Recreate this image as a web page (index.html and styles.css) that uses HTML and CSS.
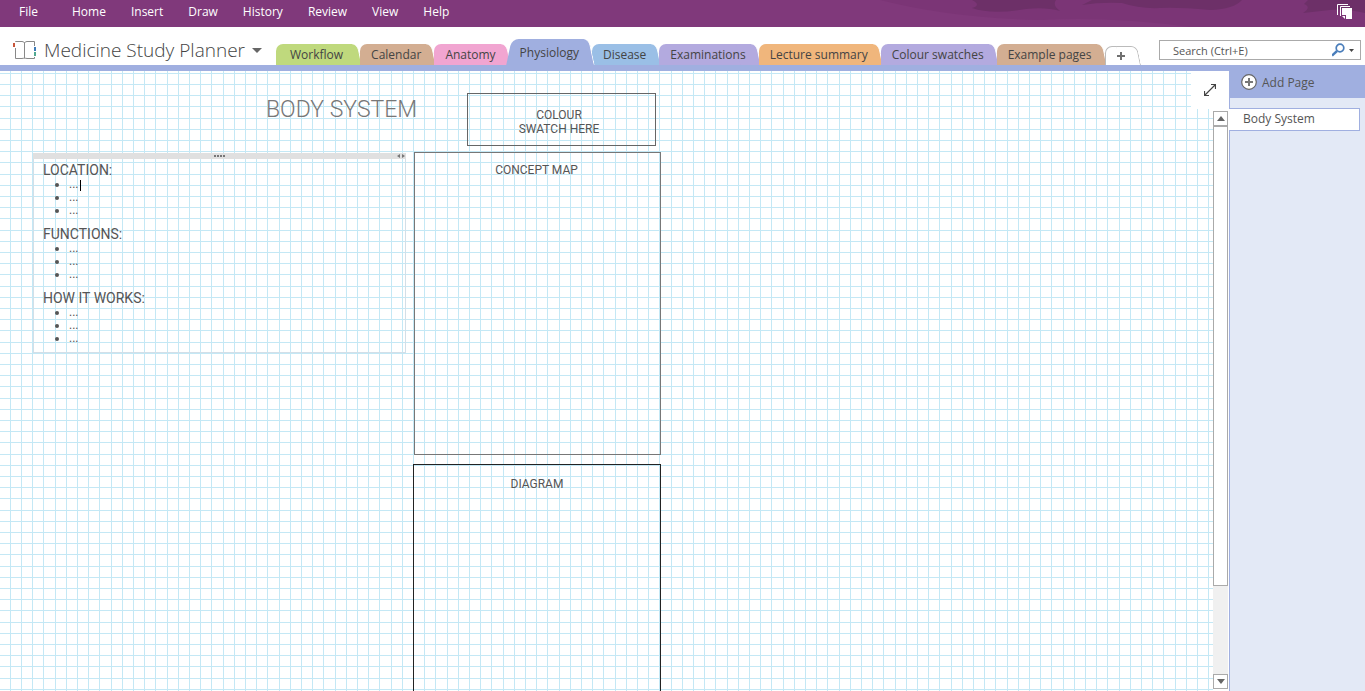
FILE: index.html
```html
<!DOCTYPE html>
<html lang="en">
<head>
  <meta charset="UTF-8">
  <title>Medicine Study Planner</title>
  <link rel="stylesheet" href="styles.css">
</head>
<body>

  <header class="menubar">
    <svg class="brush" width="505" height="27" viewBox="0 0 505 27" aria-hidden="true">
      <path fill="#7b3576" d="M20 0H505V27H330Q250 16 180 20Q90 18 20 0z"/>
      <path fill="#6d3068" d="M112 0H196Q192 5 200 11Q186 7 166 9Q132 15 112 8Q122 5 112 0z"/>
      <path fill="#6d3068" d="M232 0H382Q374 9 350 10Q318 7 300 8Q280 9 262 3Q240 2 222 5z"/>
      <path fill="#6d3068" d="M448 0H505V13Q484 8 470 10L443 13Q452 7 444 4z"/>
    </svg>
    <nav class="menu">
      <button class="file">File</button>
      <button>Home</button>
      <button>Insert</button>
      <button>Draw</button>
      <button>History</button>
      <button>Review</button>
      <button>View</button>
      <button>Help</button>
    </nav>
    <button class="stack" aria-label="Send to tool">
      <svg width="16" height="16" viewBox="0 0 16 16">
        <path fill="none" stroke="#fff" d="M.5 11V.5H11M3.5 12V2.5H13"/>
        <path fill="#fff" d="M5 4H15V15H8L5 12z"/>
        <path fill="#7b3576" d="M5 11H9V15H8V12H5z"/>
      </svg>
    </button>
  </header>

  <div class="tabrow">
    <button class="notebook">
      <svg width="24" height="20" viewBox="0 0 24 20" aria-hidden="true">
        <path fill="#fff" stroke="#888" d="M2.5 1.5H9Q11 1.5 11.5 3Q12 1.5 14 1.5H21.5V18.5H14Q12 17.5 11.5 19Q11 17.5 9 18.5H2.5zM11.5 3V18"/>
        <path fill="#fff" d="M0 2H3V8H0zM20 6H24V17H20z"/>
        <path fill="#c8553a" d="M0 3H2V7H0z"/>
        <path fill="#3d7ab8" d="M21 7H23V11H21z"/>
        <path fill="#4fa890" d="M21 12H23V16H21z"/>
      </svg>
      <span>Medicine Study Planner</span>
      <i class="caret-down"></i>
    </button>
    <nav class="tabs">
      <button class="tab green">Workflow</button>
      <button class="tab tan">Calendar</button>
      <button class="tab pink">Anatomy</button>
      <button class="tab active">Physiology</button>
      <button class="tab blue">Disease</button>
      <button class="tab purple">Examinations</button>
      <button class="tab orange">Lecture summary</button>
      <button class="tab purple">Colour swatches</button>
      <button class="tab tan">Example pages</button>
      <button class="tab add" aria-label="Create a new section">
        <svg width="8" height="8" viewBox="0 0 8 8"><path stroke="#707070" stroke-width="2" d="M4 0V8M0 4H8"/></svg>
      </button>
    </nav>
    <div class="search">
      <input type="text" placeholder="Search (Ctrl+E)" aria-label="Search">
      <svg width="28" height="14" viewBox="0 0 28 14" aria-hidden="true">
        <circle cx="8" cy="5" r="3.8" fill="none" stroke="#4a7ebb" stroke-width="1.7"/>
        <path stroke="#4a7ebb" stroke-width="2.4" d="M5 8L0 12.500"/>
        <path fill="#444" d="M17 6H22L19.500 9z"/>
      </svg>
    </div>
  </div>

  <main class="workspace">
    <section class="canvas">
      <h1 class="title">BODY SYSTEM</h1>

      <div class="box swatch">COLOUR<br>SWATCH HERE</div>
      <div class="box concept">CONCEPT MAP</div>
      <div class="box diagram">DIAGRAM</div>

      <div class="note">
        <div class="handle">
          <svg class="dots" width="12" height="2" viewBox="0 0 12 2"><path stroke="#777" stroke-width="2" stroke-dasharray="2 1" d="M0 1H11"/></svg>
          <svg class="arrows" width="9" height="4" viewBox="0 0 9 4"><path fill="#777" d="M3 0V4L0 2zM5 0V4L8 2z"/></svg>
        </div>
        <h2>LOCATION:</h2>
        <ul>
          <li>...<span class="cursor"></span></li>
          <li>...</li>
          <li>...</li>
        </ul>
        <h2>FUNCTIONS:</h2>
        <ul>
          <li>...</li>
          <li>...</li>
          <li>...</li>
        </ul>
        <h2>HOW IT WORKS:</h2>
        <ul>
          <li>...</li>
          <li>...</li>
          <li>...</li>
        </ul>
      </div>
    </section>

    <div class="scrollbar">
      <button class="arrow" aria-label="Scroll up"><svg width="8" height="5" viewBox="0 0 8 5"><path fill="#666" d="M0 5L4 0L8 5z"/></svg></button>
      <div class="track"><div class="thumb"></div></div>
      <button class="arrow" aria-label="Scroll down"><svg width="8" height="5" viewBox="0 0 8 5"><path fill="#666" d="M0 0H8L4 5z"/></svg></button>
    </div>

    <button class="expand" aria-label="Full page view">
      <svg width="12" height="12" viewBox="0 0 12 12"><path fill="none" stroke="#444" stroke-width="1.200" d="M1 11L11 1M7 .5H11.500V5M.5 7V11.500H5"/></svg>
    </button>

    <aside class="pages">
      <button class="add-page">
        <svg width="16" height="16" viewBox="0 0 16 16" aria-hidden="true">
          <circle cx="8" cy="8" r="7.300" fill="#fff" stroke="#666" stroke-width="1.200"/>
          <path stroke="#777" stroke-width="2" d="M8 4V12M4 8H12"/>
        </svg>
        Add Page
      </button>
      <a class="page" href="#">Body System</a>
    </aside>
  </main>

</body>
</html>
```
FILE: styles.css
```css
* {
  box-sizing: border-box;
}

body {
  margin: 0;
  height: 100vh;
  display: flex;
  flex-direction: column;
  overflow: hidden;
  font-family: "Open Sans", "Noto Sans", sans-serif;
  font-size: 12px;
  color: #444;
  background: #fff;
}

button {
  font: inherit;
  color: inherit;
  border: none;
  background: none;
  padding: 0;
  cursor: pointer;
}

svg {
  display: block;
}

/* top menu */
.menubar {
  position: relative;
  flex: none;
  height: 27px;
  display: flex;
  justify-content: space-between;
  background: #80397b;
  color: #fff;
}

.brush {
  position: absolute;
  right: 0;
  top: 0;
}

.menu {
  display: flex;
  gap: 25px;
  padding-left: 19px;
  height: 23px;
}

.menu .file {
  margin-right: 9px;
}

.stack {
  position: relative;
  margin-right: 12px;
  height: 24px;
}

/* notebook name and section tabs */
.tabrow {
  flex: none;
  height: 44px;
  display: flex;
  align-items: flex-end;
  border-bottom: 6px solid #a0afe0;
}

.notebook {
  flex: none;
  width: 276px;
  height: 30px;
  padding-left: 13px;
  display: flex;
  align-items: center;
  gap: 7px;
  font-size: 19px;
  font-weight: 300;
  white-space: nowrap;
}

.caret-down {
  border: 5px solid transparent;
  border-top-color: #666;
  border-bottom: none;
}

.tabs {
  flex: 1;
  min-width: 0;
  display: flex;
  align-items: flex-end;
}

.tab {
  position: relative;
  z-index: 0;
  flex: none;
  height: 21px;
  padding: 0 13px 0 11px;
  white-space: nowrap;
}

.tab::before,
.tab::after {
  content: "";
  position: absolute;
  z-index: -1;
  top: 0;
  bottom: 0;
  background: var(--tab);
}

.tab::before {
  left: 0;
  right: 10px;
  border-radius: 7px 0 0 0;
}

.tab::after {
  right: 0;
  width: 20px;
  border-radius: 0 6px 0 0;
  border-right: 1px solid #fff;
  transform: skewX(12deg);
}

.green { --tab: #bfd97d; padding: 0 17px 0 14px; }
.tan { --tab: #d3ae92; }
.pink { --tab: #f1a5d1; }
.blue { --tab: #9abfe6; }
.purple { --tab: #b3aadf; }
.orange { --tab: #f0b67c; }

.active {
  --tab: #a0afe0;
  z-index: 1;
  height: 26px;
}

.active::before {
  transform: skewX(-12deg);
}

.add {
  --tab: #fff;
  height: 19px;
  width: 34px;
  padding: 0 0 0 12px;
}

.add::before {
  border: 1px solid #bbb;
  border-width: 1px 0 0 1px;
}

.add::after {
  border: 1px solid #bbb;
  border-width: 1px 1px 0 0;
}

.search {
  flex: none;
  align-self: flex-start;
  margin: 13px 4px 0 0;
  width: 202px;
  height: 20px;
  display: flex;
  align-items: center;
  border: 1px solid #aaa;
}

.search input {
  flex: 1;
  min-width: 0;
  padding: 0 0 0 13px;
  border: none;
  outline: none;
  font: inherit;
  font-size: 11px;
}

.search input::placeholder {
  color: #555;
}

/* page area */
.workspace {
  position: relative;
  flex: 1;
  min-height: 0;
  display: flex;
}

/* five squares to every 56px */
.canvas {
  --line: #c4e8f5;
  position: relative;
  flex: 1;
  overflow: hidden;
  background-image:
    linear-gradient(90deg, var(--line) 1px, transparent 1px 11px, var(--line) 11px 12px, transparent 12px 22px, var(--line) 22px 23px, transparent 23px 33px, var(--line) 33px 34px, transparent 34px 45px, var(--line) 45px 46px, transparent 46px),
    linear-gradient(var(--line) 1px, transparent 1px 11px, var(--line) 11px 12px, transparent 12px 22px, var(--line) 22px 23px, transparent 23px 33px, var(--line) 33px 34px, transparent 34px 45px, var(--line) 45px 46px, transparent 46px);
  background-size: 56px 56px;
  background-position: 10px 2px;
  font-family: Roboto, sans-serif;
  color: #555;
}

.title {
  position: absolute;
  left: 266px;
  top: 23px;
  margin: 0;
  font-size: 23px;
  line-height: 32px;
  font-weight: 300;
  color: #777;
}

.box {
  position: absolute;
  border: 1px solid #666;
  text-align: center;
  font-size: 12px;
  line-height: 14px;
}

.swatch {
  left: 467px;
  top: 22px;
  width: 189px;
  height: 53px;
  padding: 14px 5px 0 0;
}

.concept {
  left: 414px;
  top: 81px;
  width: 247px;
  height: 303px;
  padding: 10px 2px 0 0;
  border-color: #777;
}

.diagram {
  left: 413px;
  top: 393px;
  width: 248px;
  height: 320px;
  padding: 12px 0 0;
  border-color: #222;
}

.note {
  position: absolute;
  left: 33px;
  top: 82px;
  width: 373px;
  height: 200px;
  padding-left: 9px;
  border: 1px solid #d3dfe8;
  border-top: none;
}

.handle {
  display: flex;
  align-items: center;
  justify-content: flex-end;
  height: 6px;
  margin: 0 -1px 3px -10px;
  background: #e0e0e0;
}

.dots {
  margin-right: auto;
  margin-left: 181px;
}

.note h2 {
  margin: 0;
  font-size: 14px;
  line-height: 16px;
  font-weight: 400;
}

.note ul {
  margin: 0 0 9px;
  padding: 0 0 0 26px;
  line-height: 13px;
}

.cursor {
  display: inline-block;
  width: 1px;
  height: 11px;
  margin-left: 1px;
  background: #000;
  vertical-align: text-bottom;
}

.scrollbar {
  flex: none;
  width: 16px;
  margin: 40px 0 2px;
  padding-right: 1px;
  display: flex;
  flex-direction: column;
}

.arrow {
  height: 15px;
  display: flex;
  align-items: center;
  justify-content: center;
  border: 1px solid #aaa;
}

.track {
  flex: 1;
  background: #f0f0f0;
}

.thumb {
  height: 84%;
  border: 1px solid #aaa;
  background: #fff;
}

.expand {
  position: absolute;
  right: 136px;
  top: 0;
  width: 38px;
  height: 38px;
  padding-left: 13px;
  background: #fff;
}

/* page list */
.pages {
  flex: none;
  width: 136px;
  background: #e3e9f6;
  border-left: 1px solid #a0afe0;
}

.add-page {
  width: 100%;
  height: 27px;
  margin-bottom: 10px;
  padding: 0 0 5px 11px;
  display: flex;
  align-items: center;
  gap: 5px;
  background: #a0afe0;
  color: #555;
}

.page {
  display: block;
  height: 23px;
  margin: 0 5px 0 -1px;
  padding-left: 14px;
  border: 1px solid #a0afe0;
  border-left: none;
  background: #fff;
  line-height: 20px;
  color: #555;
  text-decoration: none;
}
```
